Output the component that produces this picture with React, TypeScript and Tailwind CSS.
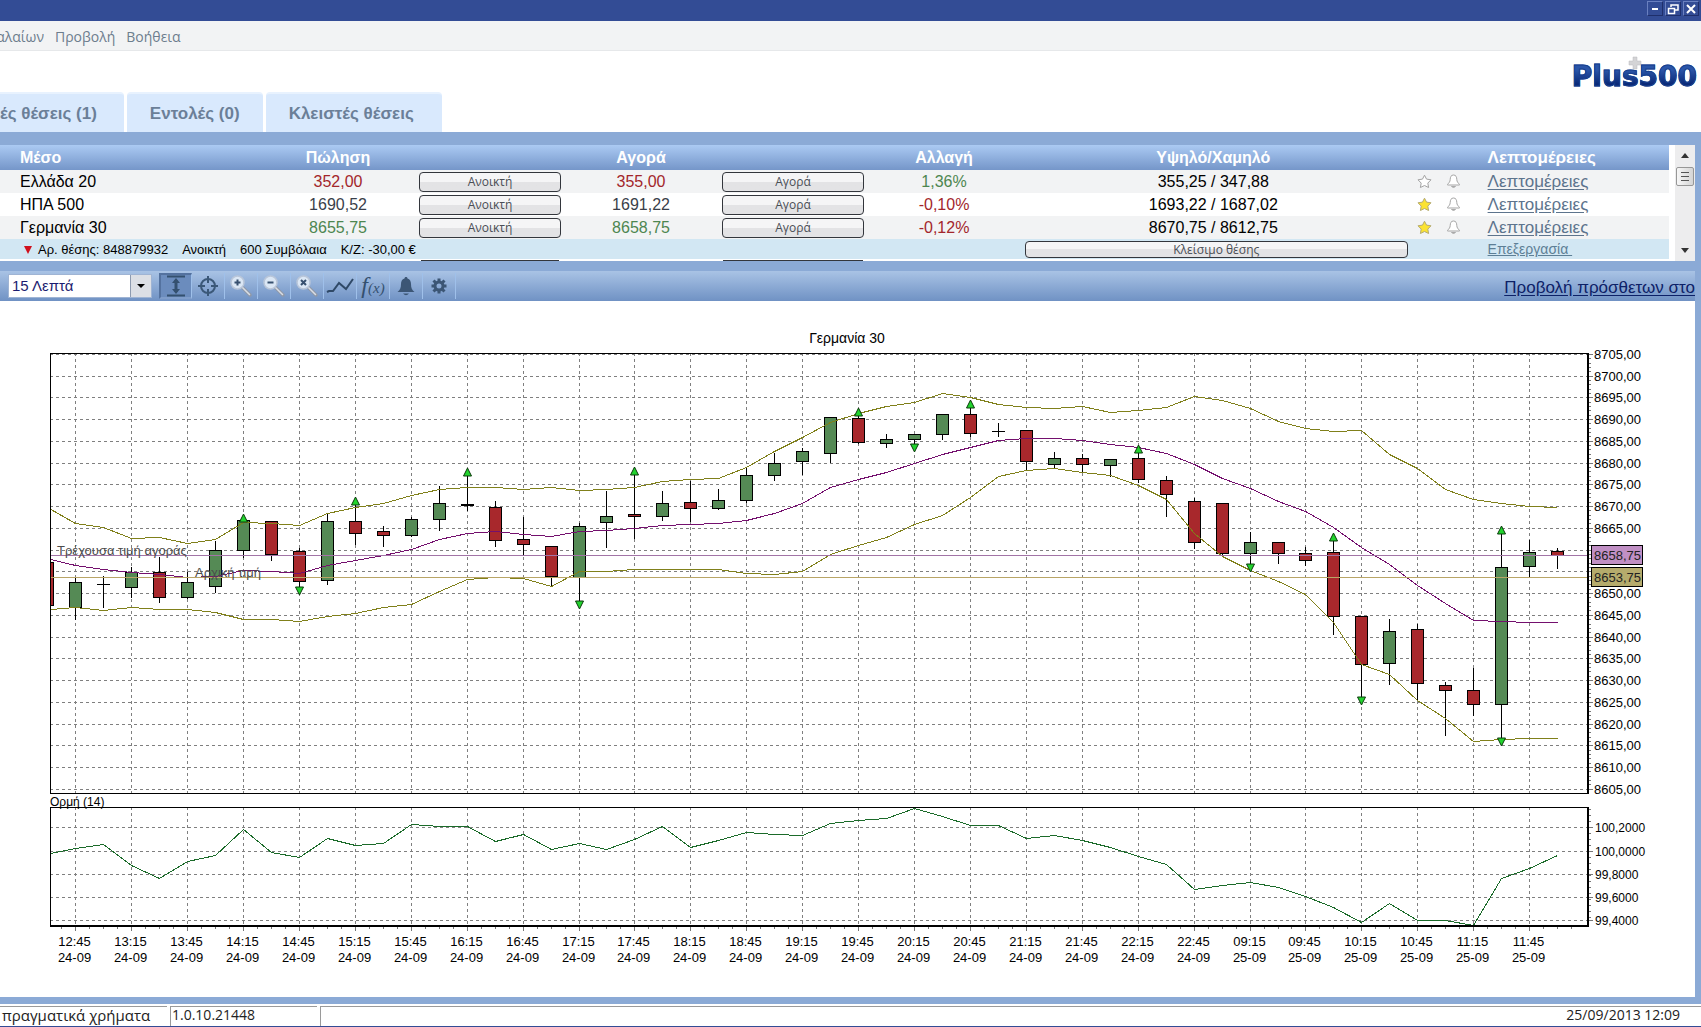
import type { ReactNode } from 'react';
import clsx from 'clsx';

type Tone = 'up' | 'down' | 'flat';

type Instrument = {
  name: string;
  sell: string;
  buy: string;
  tone: Tone;
  change: string;
  changeTone: Tone;
  range: string;
  starred: boolean;
};

const instruments: Instrument[] = [
  { name: 'Ελλάδα 20', sell: '352,00', buy: '355,00', tone: 'down', change: '1,36%', changeTone: 'up', range: '355,25 / 347,88', starred: false },
  { name: 'ΗΠΑ 500', sell: '1690,52', buy: '1691,22', tone: 'flat', change: '-0,10%', changeTone: 'down', range: '1693,22 / 1687,02', starred: true },
  { name: 'Γερμανία 30', sell: '8655,75', buy: '8658,75', tone: 'up', change: '-0,12%', changeTone: 'down', range: '8670,75 / 8612,75', starred: true },
];

const toneClass: Record<Tone, string> = {
  up: 'text-[#4d8650]',
  down: 'text-[#a3262b]',
  flat: 'text-[#3a3f4a]',
};

// Chart geometry
const LEFT = 50;
const RIGHT = 1588;
const PRICE_TOP = 52;
const PRICE_H = 440;
const MOM_TOP = 506;
const MOM_H = 118;
const barX = (i: number) => Math.round(75.25 + 27.96 * i) + 0.5;
const gridY = (k: number) => Math.floor(1.3 + 21.75 * k) + 0.5;

// high, body top, body bottom, low, colour (g/r). The first bar starts left of the plot.
type Candle = [number, number, number, number, 'g' | 'r'];
const candles: Candle[] = [
  [209, 209, 252, 252, 'r'], [225, 229, 254, 266, 'g'], [223, 231, 231, 254, 'g'], [214, 219, 234, 244, 'g'],
  [204, 219, 244, 249, 'r'], [219, 229, 244, 245, 'g'], [188, 197, 233, 239, 'g'], [165, 167, 197, 204, 'g'],
  [168, 168, 201, 207, 'r'], [195, 198, 228, 235, 'r'], [161, 168, 227, 231, 'g'], [152, 168, 180, 191, 'r'],
  [173, 178, 182, 193, 'r'], [164, 166, 182, 183, 'g'], [133, 150, 166, 177, 'g'], [122, 151, 152, 157, 'g'],
  [148, 154, 187, 193, 'r'], [164, 186, 191, 202, 'r'], [193, 193, 223, 232, 'r'], [170, 173, 224, 249, 'g'],
  [138, 163, 169, 194, 'g'], [121, 161, 163, 185, 'r'], [138, 150, 163, 167, 'g'], [128, 149, 155, 168, 'r'],
  [136, 147, 155, 156, 'g'], [115, 122, 147, 149, 'g'], [100, 110, 122, 127, 'g'], [95, 98, 108, 121, 'g'],
  [64, 64, 100, 109, 'g'], [62, 65, 89, 90, 'r'], [81, 86, 90, 94, 'g'], [81, 81, 86, 92, 'g'],
  [61, 61, 81, 86, 'g'], [54, 61, 80, 83, 'r'], [70, 78, 78, 83, 'g'], [77, 77, 108, 116, 'r'],
  [99, 105, 111, 115, 'g'], [101, 105, 111, 118, 'r'], [106, 106, 112, 123, 'g'], [99, 105, 126, 129, 'r'],
  [123, 127, 141, 163, 'r'], [145, 148, 189, 195, 'r'], [150, 150, 200, 201, 'r'], [179, 189, 200, 212, 'g'],
  [189, 189, 200, 210, 'r'], [194, 200, 207, 212, 'r'], [187, 199, 263, 281, 'r'], [263, 263, 311, 345, 'r'],
  [266, 278, 310, 331, 'g'], [271, 276, 330, 347, 'r'], [329, 332, 337, 382, 'r'], [315, 337, 351, 362, 'r'],
  [180, 214, 351, 386, 'g'], [187, 199, 213, 224, 'g'], [195, 198, 202, 215, 'r'],
];

// bar index, y of the tip
const upMarks = [[6, 161], [10, 144], [14, 115], [20, 114], [28, 55], [32, 47], [38, 92], [45, 180], [51, 173]];
const downMarks = [[8, 242], [18, 256], [30, 99], [42, 219], [46, 352], [51, 393]];

const upperBand = [
  156, 170, 174, 185, 184, 190, 186, 169, 170, 172, 160, 154, 150, 142, 136, 134, 134, 136, 134, 137, 136, 134, 128, 126,
  125, 114, 98, 84, 69, 60, 53, 49, 40, 44, 51, 54, 55, 53, 59, 57, 54, 43, 47, 55, 68, 75, 78, 77, 101, 115, 136, 146,
  150, 153, 154,
];
const middleBand = [
  206, 212, 216, 219, 221, 224, 223, 217, 218, 220, 212, 207, 202, 196, 186, 180, 178, 181, 183, 178, 177, 175, 172, 171,
  170, 167, 160, 150, 134, 126, 119, 110, 101, 94, 87, 85, 85, 87, 91, 94, 100, 111, 125, 135, 148, 158, 174, 194, 211,
  232, 250, 267, 268, 269, 269,
];
const lowerBand = [
  256, 254, 257, 254, 256, 256, 259, 266, 266, 268, 263, 260, 254, 251, 238, 226, 224, 225, 233, 218, 218, 216, 216, 216,
  216, 220, 221, 218, 201, 192, 184, 171, 162, 144, 123, 117, 115, 119, 122, 132, 146, 180, 203, 217, 228, 241, 269, 311,
  321, 347, 365, 388, 386, 385, 385,
];
const momentum = [
  46, 41, 37, 58, 71, 54, 48, 22, 45, 50, 31, 38, 36, 17, 19, 19, 34, 27, 42, 36, 42, 32, 19, 40, 33, 25, 27, 28, 16, 13,
  11, 1, 9, 18, 18, 31, 28, 33, 40, 49, 57, 82, 78, 75, 80, 89, 100, 115, 96, 113, 113, 118, 71, 61, 48,
];

const times = [
  '12:45', '13:15', '13:45', '14:15', '14:45', '15:15', '15:45', '16:15', '16:45', '17:15', '17:45', '18:15', '18:45',
  '19:15', '19:45', '20:15', '20:45', '21:15', '21:45', '22:15', '22:45', '09:15', '09:45', '10:15', '10:45', '11:15', '11:45',
];
const momentumTicks = [
  { y: 20, label: '100,2000' },
  { y: 44, label: '100,0000' },
  { y: 67, label: '99,8000' },
  { y: 90, label: '99,6000' },
  { y: 113, label: '99,4000' },
];

const toPoints = (ys: number[]) =>
  ys.map((y, i) => `${i === 0 ? LEFT + 1 : barX(i - 1)},${y + 0.5}`).join(' ');

// levels covered by the two price tags get no label
const priceLabels = Array.from({ length: 21 }, (_, k) => ({ price: 8705 - k * 5, y: gridY(k) })).filter(
  ({ price }) => price !== 8660 && price !== 8655,
);

function PriceTag({ y, label, fill }: { y: number; label: string; fill: string }) {
  return (
    <g>
      <rect x="1591.5" y={y - 9.5} width="51" height="19" fill={fill} stroke="#000" shapeRendering="crispEdges" />
      <text x="1594" y={y + 5} fill="#222">{label}</text>
    </g>
  );
}

function Chart() {
  return (
    <svg viewBox="0 0 1695 696" className="block w-full font-['Liberation_Sans',Arial,sans-serif] text-[13px]" role="img" aria-label="Γερμανία 30">
      <text x="847" y="42" textAnchor="middle" fontSize="14">Γερμανία 30</text>

      {/* Price panel */}
      <g transform={`translate(0 ${PRICE_TOP})`}>
        <clipPath id="price-clip">
          <rect x={LEFT} y="0" width={RIGHT - LEFT} height={PRICE_H} />
        </clipPath>
        <g shapeRendering="crispEdges">
          <g stroke="#7f7f7f" strokeDasharray="3 3">
            {Array.from({ length: 21 }, (_, k) => (
              <line key={k} x1={LEFT} x2={RIGHT} y1={gridY(k)} y2={gridY(k)} />
            ))}
            {times.map((t, i) => (
              <line key={t} x1={barX(i * 2)} x2={barX(i * 2)} y1="0" y2={PRICE_H} />
            ))}
          </g>
          <g clipPath="url(#price-clip)">
            {candles.map(([high, top, bottom, low, color], i) => {
              const x = barX(i - 1);
              return (
                <g key={i} stroke="#000">
                  <line x1={x} x2={x} y1={high} y2={low + 1} />
                  {top === bottom ? (
                    <line x1={x - 6.5} x2={x + 6.5} y1={top + 0.5} y2={top + 0.5} />
                  ) : (
                    <rect x={x - 6} y={top + 0.5} width="12" height={bottom - top} fill={color === 'g' ? '#558a55' : '#a8282c'} />
                  )}
                </g>
              );
            })}
            <g fill="none">
              <polyline points={toPoints(upperBand)} stroke="#80801a" />
              <polyline points={toPoints(lowerBand)} stroke="#80801a" />
              <polyline points={toPoints(middleBand)} stroke="#74106e" />
              <path d={`M${LEFT} 202.5H${RIGHT}`} stroke="#a274a6" />
              <path d={`M${LEFT} 224.5H${RIGHT}`} stroke="#b9a566" />
            </g>
          </g>
          <path d={`M${LEFT + 0.5} ${PRICE_H + 0.5}V0.5H${RIGHT}`} fill="none" stroke="#000" />
          <path d={`M${LEFT} ${PRICE_H + 0.5}H${RIGHT}`} stroke="#000" />
          <path d={`M${RIGHT} 0V${PRICE_H + 1}`} stroke="#000" strokeWidth="2" />
          <g stroke="#777">
            {Array.from({ length: 101 }, (_, k) => {
              const y = Math.floor(1.3 + 4.35 * k) + 0.5;
              return <line key={k} x1={RIGHT + 1} x2={k % 5 === 0 ? RIGHT + 5 : RIGHT + 3} y1={y} y2={y} />;
            })}
          </g>
        </g>
        <g fill="#22d32e" stroke="#0a3a0a">
          {upMarks.map(([i, y]) => (
            <path key={i} d={`M${barX(i)} ${y}l4 8h-8z`} />
          ))}
          {downMarks.map(([i, y]) => (
            <path key={i} d={`M${barX(i)} ${y}l4 -8h-8z`} />
          ))}
        </g>
        {priceLabels.map(({ price, y }) => (
          <text key={price} x="1594" y={y + 4.5}>{`${price},00`}</text>
        ))}
        <PriceTag y={202} label="8658,75" fill="#c08fc4" />
        <PriceTag y={224} label="8653,75" fill="#b5ab6c" />
        <text x="57" y="202" fill="#4c4c4c">Τρέχουσα τιμή αγοράς</text>
        <text x="195" y="224" fill="#4c4c4c">Αρχική τιμή</text>
      </g>

      {/* Momentum panel */}
      <text x="50" y="505" fontSize="12">Ορμή (14)</text>
      <g transform={`translate(0 ${MOM_TOP})`}>
        <g shapeRendering="crispEdges">
          <g stroke="#7f7f7f" strokeDasharray="3 3">
            {momentumTicks.map(({ y }) => (
              <line key={y} x1={LEFT} x2={RIGHT} y1={y + 0.5} y2={y + 0.5} />
            ))}
            {times.map((t, i) => (
              <line key={t} x1={barX(i * 2)} x2={barX(i * 2)} y1="0" y2={MOM_H} />
            ))}
          </g>
          <polyline points={toPoints(momentum)} fill="none" stroke="#1b6b2a" />
          <path d={`M${LEFT + 0.5} ${MOM_H}V0.5H${RIGHT}`} fill="none" stroke="#000" />
          <path d={`M${RIGHT} 0V${MOM_H + 1}H${LEFT}`} fill="none" stroke="#000" strokeWidth="2" />
          <g stroke="#777">
            {Array.from({ length: 19 }, (_, k) => {
              const y = Math.round(2 + k * 6) + 0.5;
              return <line key={k} x1={RIGHT + 1} x2={RIGHT + 3} y1={y} y2={y} />;
            })}
            {momentumTicks.map(({ y }) => (
              <line key={y} x1={RIGHT + 1} x2={RIGHT + 5} y1={y + 0.5} y2={y + 0.5} />
            ))}
            {Array.from({ length: 109 }, (_, k) => {
              const x = Math.round(61.25 + 13.98 * k) + 0.5;
              return <line key={k} x1={x} x2={x} y1={MOM_H + 2} y2={k % 4 === 1 ? MOM_H + 6 : MOM_H + 4} />;
            })}
          </g>
        </g>
        {momentumTicks.map(({ y, label }) => (
          <text key={label} x="1595" y={y + 5} fontSize="12">{label}</text>
        ))}
        <g textAnchor="middle">
          {times.map((t, i) => (
            <g key={t}>
              <text x={barX(i * 2) - 1} y="139">{t}</text>
              <text x={barX(i * 2) - 1} y="155">{i < 21 ? '24-09' : '25-09'}</text>
            </g>
          ))}
        </g>
      </g>
    </svg>
  );
}

function Star({ filled }: { filled: boolean }) {
  return (
    <svg viewBox="0 0 15 15" className="size-[15px]" aria-hidden="true">
      <path
        d="M7.500 1.200l2 3.900 4.500.700-3.200 3.300.8 4.400-4.100-2-4.100 2 .8-4.400L1 5.800l4.500-.7z"
        fill={filled ? '#fbe332' : '#fff'}
        stroke={filled ? '#b5ab72' : '#a3a3a3'}
        strokeLinejoin="round"
      />
    </svg>
  );
}

function Bell() {
  return (
    <svg viewBox="0 0 15 15" className="size-[15px]" aria-hidden="true">
      <path d="M7.500 1C5 1 4.300 3 4.200 5.500 4.100 8 3 8.500 1.500 10.500v.500h12v-.500C12 8.500 10.900 8 10.800 5.500 10.700 3 10 1 7.500 1z" fill="#fff" stroke="#a5a5a5" />
      <path d="M5.500 12.500q2 2 4 0z" fill="#ccc" stroke="#aaa" />
    </svg>
  );
}

function TradeButton({ children, className }: { children: ReactNode; className?: string }) {
  return (
    <button
      type="button"
      className={clsx(
        'block w-full rounded border border-[#33363c] bg-linear-to-b from-[#f5f5f6] from-50% to-[#e3e3e5] to-50% text-center text-xs text-[#4a4e55] font-["Open_Sans","Noto_Sans",sans-serif]',
        className,
      )}
    >
      {children}
    </button>
  );
}

function Magnifier({ mark }: { mark: string }) {
  return (
    <svg viewBox="0 0 24 24" className="size-6" aria-hidden="true">
      <path d="M12 12l9 9" stroke="#9099a8" strokeWidth="3.500" strokeLinecap="round" />
      <path d="M12 12l8.500 8.500" stroke="#d9dee6" strokeWidth="1.500" strokeLinecap="round" />
      <circle cx="8.500" cy="8.500" r="6.500" fill="#dbe7f5" stroke="#b9c6d9" strokeWidth="1.500" />
      <path d={mark} stroke="#37506f" strokeWidth="2" />
    </svg>
  );
}

const tools: { label: string; icon: ReactNode }[] = [
  {
    label: 'Κλίμακα',
    icon: (
      <svg viewBox="0 0 24 24" className="size-6" fill="none" stroke="#34506f" aria-hidden="true">
        <path d="M3 2.500h18M3 21.500h18" strokeWidth="2" />
        <path d="M12 6v12" strokeWidth="3" />
        <path d="M12 4l4 5H8zM12 20l4-5H8z" fill="#34506f" stroke="none" />
      </svg>
    ),
  },
  {
    label: 'Σταυρόνημα',
    icon: (
      <svg viewBox="0 0 24 24" className="size-6" fill="none" stroke="#3b5878" strokeWidth="2" aria-hidden="true">
        <circle cx="12" cy="12" r="7" />
        <path d="M12 2v7M12 15v7M2 12h7M15 12h7" />
      </svg>
    ),
  },
  { label: 'Μεγέθυνση', icon: <Magnifier mark="M8.500 5.500v6M5.500 8.500h6" /> },
  { label: 'Σμίκρυνση', icon: <Magnifier mark="M5.500 8.500h6" /> },
  { label: 'Επαναφορά', icon: <Magnifier mark="M6 6l5 5M11 6l-5 5" /> },
  {
    label: 'Γραμμή',
    icon: (
      <svg viewBox="0 0 28 24" className="h-6 w-7" fill="none" stroke="#2f4967" strokeWidth="2" aria-hidden="true">
        <path d="M1 18l2-1h4l6-8 7 6 7-10" />
      </svg>
    ),
  },
  {
    label: 'Δείκτες',
    icon: (
      <span className="font-['Liberation_Serif',serif] text-[15px] leading-6 text-[#34506f] italic">
        <span className="text-2xl leading-6">f</span>(x)
      </span>
    ),
  },
  {
    label: 'Ειδοποίηση',
    icon: (
      <svg viewBox="0 0 24 24" className="size-6" fill="#3c5675" aria-hidden="true">
        <path d="M12 3c-1 0-1.500.700-1.500 1.500C8 5.300 7 7.500 7 10c0 4-1 6-3.500 8h17C18 16 17 14 17 10c0-2.500-1-4.700-3.500-5.500C13.500 3.700 13 3 12 3zM9 19.500h6q-3 3.500-6 0z" />
      </svg>
    ),
  },
  {
    label: 'Ρυθμίσεις',
    icon: (
      <svg viewBox="0 0 24 24" className="size-6" fill="none" stroke="#3c5675" aria-hidden="true">
        <circle cx="12" cy="12" r="4" strokeWidth="3" />
        <path d="M12 4.500v3M12 16.500v3M4.500 12h3M16.500 12h3M6.500 6.500l2.500 2.500M15 15l2.500 2.500M17.500 6.500l-2.500 2.500M9 15l-2.500 2.500" strokeWidth="3" />
      </svg>
    ),
  },
];

function TitleButton({ label, children }: { label: string; children: ReactNode }) {
  return (
    <button
      type="button"
      aria-label={label}
      className="flex h-[15px] w-4 items-center justify-center border border-t-[#6a80c0] border-r-[#1f2f6b] border-b-[#1f2f6b] border-l-[#6a80c0] bg-[#334c95]"
    >
      <svg viewBox="0 0 12 12" className="size-3" fill="none" stroke="#fff" strokeWidth="2" aria-hidden="true">
        {children}
      </svg>
    </button>
  );
}

function InstrumentTable() {
  return (
    <table className="w-full table-fixed border-collapse text-base leading-[23px]">
      <colgroup>
        <col className="w-[16%]" />
        <col className="w-[142px]" />
        <col className="w-[162px]" />
        <col className="w-[140px]" />
        <col className="w-[164px]" />
        <col className="w-[138px]" />
        <col className="w-[24%]" />
        <col className="w-[50px]" />
        <col />
      </colgroup>
      <thead>
        <tr className="h-[25px] bg-linear-to-b from-[#abcaf3] to-[#7596c9] text-white">
          <th className="pl-5 text-left">Μέσο</th>
          <th>Πώληση</th>
          <th />
          <th>Αγορά</th>
          <th />
          <th>Αλλαγή</th>
          <th>Υψηλό/Χαμηλό</th>
          <th />
          <th className="pl-6 text-left text-[17px]">Λεπτομέρειες</th>
        </tr>
      </thead>
      <tbody className="text-center">
        {instruments.map((row) => (
          <tr key={row.name} className="h-[23px] odd:bg-[#f2f3f4]">
            <td className="pl-5 text-left">{row.name}</td>
            <td className={toneClass[row.tone]}>{row.sell}</td>
            <td className="px-2.5">
              <TradeButton className="h-5 leading-[18px]">Ανοικτή</TradeButton>
            </td>
            <td className={toneClass[row.tone]}>{row.buy}</td>
            <td className="px-[11px]">
              <TradeButton className="h-5 leading-[18px]">Αγορά</TradeButton>
            </td>
            <td className={toneClass[row.changeTone]}>{row.change}</td>
            <td>{row.range}</td>
            <td>
              <div className="flex items-center justify-between px-[3px]">
                <button type="button" aria-label="Αγαπημένα"><Star filled={row.starred} /></button>
                <button type="button" aria-label="Ειδοποίηση"><Bell /></button>
              </div>
            </td>
            <td className="pl-6 text-left leading-5">
              <a href="#" className="block text-[17px] text-[#5d748d] underline underline-offset-2">Λεπτομέρειες</a>
            </td>
          </tr>
        ))}
        <tr className="h-5 bg-[#d2e7f3] leading-5">
          <td colSpan={6} className="pl-6 text-left">
            <div className="flex items-center gap-3.5 pt-px text-[13px] leading-[19px]">
              <span className="flex items-center gap-1.5">
                <svg viewBox="0 0 8 8" className="size-2" aria-hidden="true"><path d="M0 0h8L4 8z" fill="#d0101c" /></svg>
                Αρ. θέσης: 848879932
              </span>
              <span>Ανοικτή</span>
              <span>600 Συμβόλαια</span>
              <span>Κ/Ζ: -30,00 €</span>
            </div>
          </td>
          <td className="pr-1.5 pl-3">
            <TradeButton className="h-[17px] leading-[15px]">Κλείσιμο θέσης</TradeButton>
          </td>
          <td />
          <td className="pl-6 text-left text-sm leading-5">
            <a href="#" className="block whitespace-pre text-[#5d7f96] underline">{'Επεξεργασία '}</a>
          </td>
        </tr>
        {/* top edge of the next row, cut by the scroll area */}
        <tr className="h-0.5 leading-[0]">
          <td colSpan={2} />
          <td className="px-3"><div className="mt-px h-px bg-[#33363c]" /></td>
          <td />
          <td className="px-3"><div className="mt-px h-px bg-[#33363c]" /></td>
          <td colSpan={4} />
        </tr>
      </tbody>
    </table>
  );
}

export default function App() {
  return (
    <div className="flex min-h-screen flex-col overflow-hidden bg-white font-['Liberation_Sans',Arial,sans-serif] text-black">
      {/* Title bar */}
      <div className="flex h-[21px] justify-end gap-0.5 bg-[#334c95] pt-px pr-0.5">
        <TitleButton label="Ελαχιστοποίηση"><path d="M3 6h6" /></TitleButton>
        <TitleButton label="Επαναφορά παραθύρου"><path d="M4 4V2h7v5H8M1.500 5.500h6v5h-6z" strokeWidth="1.500" /></TitleButton>
        <TitleButton label="Κλείσιμο"><path d="M2 2l8 8M10 2l-8 8" /></TitleButton>
      </div>

      <nav className="flex h-[30px] items-center gap-[11px] border-b border-[#e6e8ea] bg-[#f2f3f4] pt-0.5 font-['Open_Sans','Noto_Sans',sans-serif] text-sm text-[#6d7d8d]">
        <button type="button" className="flex w-11 justify-end overflow-hidden">αλαίων</button>
        <button type="button">Προβολή</button>
        <button type="button">Βοήθεια</button>
      </nav>

      <header className="flex h-[81px] items-end justify-between">
        <div className="flex h-10 gap-[3px] text-[17px] font-bold text-[#6b7f98]">
          <button type="button" className="rounded-tr border-t-2 border-[#e8f2fe] bg-[#d9e9fd] pt-0.5 pr-[27px]">ές θέσεις (1)</button>
          <button type="button" className="rounded-t border-t-2 border-[#e8f2fe] bg-[#d9e9fd] px-[23px] pt-0.5">Εντολές (0)</button>
          <button type="button" className="rounded-t border-t-2 border-[#e8f2fe] bg-[#d9e9fd] pt-0.5 pr-7 pl-[23px]">Κλειστές θέσεις</button>
        </div>
        <div className="relative self-start pt-[9px] pr-1">
          <svg viewBox="0 0 14 14" className="absolute top-[5px] right-[59px] size-3.5" aria-hidden="true">
            <path d="M5 1h4v4h4v4H9v4H5V9H1V5h4z" fill="#d4d4d6" stroke="#b9b9bd" strokeWidth=".500" />
          </svg>
          <span className="relative block bg-linear-to-b from-[#2a55a8] from-30% to-[#0b2a78] to-70% bg-clip-text font-['DejaVu_Sans',sans-serif] text-[28px] leading-[34px] font-bold text-transparent [-webkit-text-stroke:1px_#173f8e]">
            Plus500
          </span>
        </div>
      </header>

      <main className="flex grow flex-col border-r-[6px] border-[#8baad6]">
        {/* Instruments */}
        <section className="flex border-t-[13px] border-b-10 border-[#8baad6]">
          <div className="min-w-0 grow">
            <InstrumentTable />
          </div>
          <div className="ml-1.5 flex w-5 shrink-0 flex-col items-center bg-[#ededee] py-2" aria-hidden="true">
            <svg viewBox="0 0 8 5" className="mb-[9px] h-[5px] w-2"><path d="M4 0l4 5H0z" fill="#333" /></svg>
            <div className="flex h-[19px] w-[18px] flex-col items-center justify-center gap-[3px] rounded-xs border border-[#979797] bg-linear-to-r from-[#f7f7f7] to-[#d5d5d5]">
              <span className="h-px w-2 bg-[#555]" />
              <span className="h-px w-2 bg-[#555]" />
              <span className="h-px w-2 bg-[#555]" />
            </div>
            <svg viewBox="0 0 8 5" className="mt-auto h-[5px] w-2"><path d="M0 0h8L4 5z" fill="#333" /></svg>
          </div>
        </section>

        {/* Chart toolbar */}
        <div className="flex h-[30px] items-center overflow-hidden bg-linear-to-b from-[#a9c3e5] to-[#7092c4] pl-2">
          <div className="relative h-6 w-36 shrink-0">
            <select aria-label="Χρονικό διάστημα" className="size-full appearance-none border border-[#9fb4d4] bg-white pl-[3px] text-[15px] leading-5 text-[#1c1c70]">
              <option>15 Λεπτά</option>
            </select>
            <span className="pointer-events-none absolute inset-y-px right-px flex w-[21px] items-center justify-center border-l border-[#8e9bb0] bg-[#dcdfe5]">
              <svg viewBox="0 0 8 4" className="h-1 w-2" aria-hidden="true"><path d="M0 0h8L4 4z" /></svg>
            </span>
          </div>
          <div className="ml-[7px] flex shrink-0">
            {tools.map((tool, i) => (
              <button
                key={tool.label}
                type="button"
                aria-label={tool.label}
                className={clsx(
                  'flex h-[26px] w-[33px] items-center justify-center border-r border-[#9fc0ea]',
                  i === 0 && 'border-2 border-t-[#54729f] border-r-[#9fc0ea] border-b-[#7f9dca] border-l-[#54729f] bg-[#6b8cbd]',
                )}
              >
                {tool.icon}
              </button>
            ))}
          </div>
          <a href="#" className="ml-auto shrink-0 pt-1 text-[17px] whitespace-nowrap text-[#0d2167] underline underline-offset-2">
            Προβολή πρόσθετων στο
          </a>
        </div>

        <section className="grow">
          <Chart />
        </section>
        <div className="h-[7px] bg-[#8baad6]" />
      </main>

      {/* Status bar */}
      <footer className="flex h-[23px] gap-[3px] border-b border-[#334c95] pt-0.5 font-['Open_Sans','Noto_Sans',sans-serif] text-sm leading-4 text-[#222]">
        <div className="w-[167px] border-t border-[#9a9a9a] pl-0.5 text-[15px] leading-4 whitespace-nowrap">πραγματικά χρήματα</div>
        <div className="w-[147px] border-t border-l border-[#9a9a9a] pl-px">1.0.10.21448</div>
        <div className="grow border-t border-l border-[#9a9a9a] pr-[21px] text-right">25/09/2013 12:09</div>
      </footer>
    </div>
  );
}
